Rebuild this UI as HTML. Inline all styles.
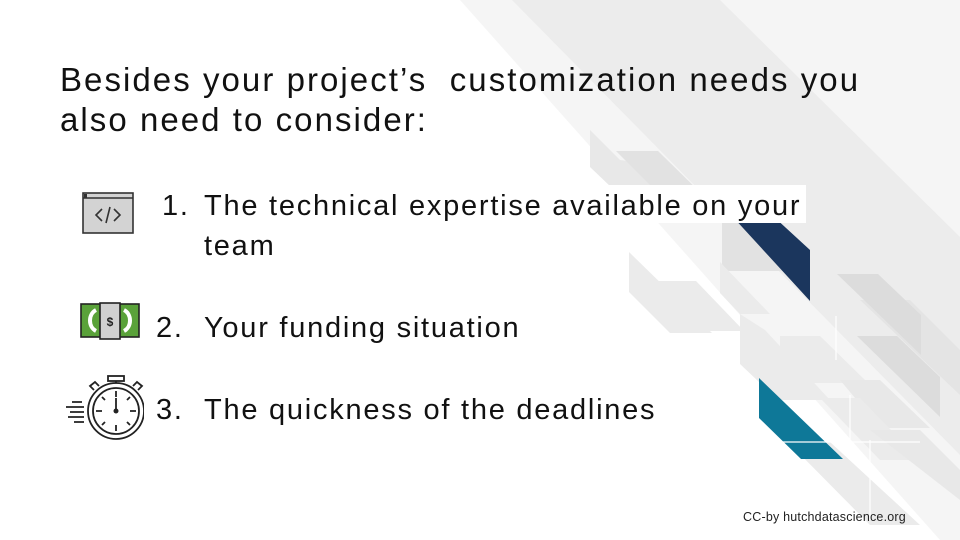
<!DOCTYPE html>
<html><head><meta charset="utf-8"><style>
html,body{margin:0;padding:0}
body{width:960px;height:540px;position:relative;overflow:hidden;background:#fff;font-family:"Liberation Sans",sans-serif;color:#111}
svg.bg{position:absolute;left:0;top:0}
.t{position:absolute;white-space:nowrap}
.h{left:60px;font-size:33px;letter-spacing:2.05px;line-height:40px}
.li{font-size:29px;letter-spacing:1.75px;line-height:36px}
</style></head><body>
<svg class="bg" width="960" height="540" viewBox="0 0 960 540">
<polygon points="460,0 960,0 960,540 940,540" fill="#f5f5f5"/>
<polygon points="512,0 720,0 960,237 960,455" fill="#ececec"/>
<!-- top-left small shapes -->
<polygon points="590,130 590,167 612,188 680,188 656,165 620,160" fill="#e8e8e8"/>
<polygon points="616,151 658,151 705,197 662,197" fill="#e2e2e2"/>
<!-- strip near navy -->
<polygon points="722,223 752,223 800,271 722,271" fill="#e2e2e2"/>
<polygon points="732,216 773,216 810,250 810,301" fill="#1b365d"/>
<!-- left mid shapes -->
<polygon points="629,252 629,292 670,333 712,333" fill="#ebebeb"/>
<polygon points="655,281 696,281 744,331 704,331" fill="#ebebeb"/>
<polygon points="720,262 720,293 740,314 770,314" fill="#ebebeb"/>
<polygon points="740,314 740,364 778,400 830,400 765,330" fill="#ebebeb"/>
<polygon points="860,300 910,300 960,350 960,395" fill="#e4e4e4"/>
<!-- right grey -->
<polygon points="837,274 878,274 921,315 921,355" fill="#dcdcdc"/>
<polygon points="857,336 897,336 940,377 940,417" fill="#dcdcdc"/>
<polygon points="780,336 820,336 868,383 780,383" fill="#ebebeb"/>
<polygon points="840,380 880,380 930,428 880,428" fill="#e8e8e8"/>
<polygon points="820,398 860,398 920,460 880,460" fill="#ebebeb"/>
<polygon points="788,442 830,442 920,525 870,525" fill="#ebebeb"/>
<polygon points="870,430 920,430 960,470 960,500" fill="#e8e8e8"/>
<polygon points="759,378 759,418 801,459 843,459" fill="#0e7898"/>
<g stroke="#fff" stroke-width="1.2">
<line x1="738" y1="442" x2="920" y2="442"/>
<line x1="850" y1="395" x2="850" y2="445"/>
<line x1="870" y1="440" x2="870" y2="520"/>
<line x1="836" y1="316" x2="836" y2="360"/>
</g>
<rect x="198" y="185" width="608" height="38" fill="#fff"/>
</svg>

<div class="t h" style="top:60px">Besides your project’s&nbsp; customization needs you</div>
<div class="t h" style="top:100px">also need to consider:</div>

<div class="t li" style="left:162px;top:188px">1.</div>
<div class="t li" style="left:204px;top:188px">The technical expertise available on your</div>
<div class="t li" style="left:204px;top:228px">team</div>
<div class="t li" style="left:156px;top:310px">2.</div>
<div class="t li" style="left:204px;top:310px">Your funding situation</div>
<div class="t li" style="left:156px;top:392px">3.</div>
<div class="t li" style="left:204px;top:392px">The quickness of the deadlines</div>

<div class="t" style="left:743px;top:510px;font-size:12.5px;letter-spacing:0.2px;color:#222">CC-by hutchdatascience.org</div>

<svg style="position:absolute;left:82px;top:192px" width="52" height="42" viewBox="0 0 52 42">
<rect x="1" y="1" width="50" height="40" fill="#d3d3d3" stroke="#333" stroke-width="1.6"/>
<line x1="1" y1="6" x2="51" y2="6" stroke="#333" stroke-width="1.4"/>
<rect x="2" y="2" width="3" height="4" fill="#333"/>
<path d="M20 17 L14 23 L20 29 M32 17 L38 23 L32 29 M28 15 L24 31" fill="none" stroke="#333" stroke-width="1.6"/>
</svg>
<svg style="position:absolute;left:80px;top:302px" width="60" height="38" viewBox="0 0 60 38">
<rect x="1" y="2" width="58" height="33" fill="#5aa23a" stroke="#222" stroke-width="1.6"/>
<path d="M16 8 C8 12 8 25 16 29 M44 8 C52 12 52 25 44 29" fill="none" stroke="#fff" stroke-width="4"/>
<rect x="20" y="1" width="20" height="36" fill="#d0d0d0" stroke="#222" stroke-width="1.6"/>
<text x="30" y="24" font-size="12" font-weight="bold" text-anchor="middle" fill="#222" font-family="Liberation Sans">$</text>
</svg>
<svg style="position:absolute;left:64px;top:374px" width="80" height="68" viewBox="0 0 80 68">
<g fill="none" stroke="#222" stroke-width="1.8">
<circle cx="52" cy="37" r="28"/><circle cx="52" cy="37" r="23"/>
<rect x="44" y="2" width="16" height="5"/><line x1="52" y1="7" x2="52" y2="9"/>
<path d="M30 16 l-4 -4 l5 -4 l4 4 M74 16 l4 -4 l-5 -4 l-4 4"/>
<path d="M52 17v6M52 51v6M32 37h6M66 37h6M38 23l3 3M66 23l-3 3M38 51l3-3M66 51l-3-3"/>
<line x1="52" y1="24" x2="52" y2="36"/>
<path d="M2 33h18M6 38h14M4 43h16M8 28h10M10 48h10"/>
</g>
<circle cx="52" cy="37" r="2.5" fill="#222"/>
</svg>
</body></html>
